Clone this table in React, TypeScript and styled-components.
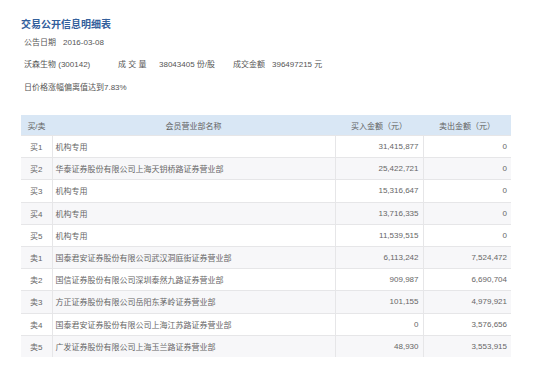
import styled, { createGlobalStyle } from 'styled-components';

const GlobalStyle = createGlobalStyle`
  body {
    margin: 0;
    background: #fff;
    font-family: "Liberation Sans", "Noto Sans CJK SC", sans-serif;
    color: #555;
  }
`;

type Trade = { side: string; name: string; buy: string; sell: string };

const trades: Trade[] = [
  { side: '买1', name: '机构专用', buy: '31,415,877', sell: '0' },
  { side: '买2', name: '华泰证券股份有限公司上海天钥桥路证券营业部', buy: '25,422,721', sell: '0' },
  { side: '买3', name: '机构专用', buy: '15,316,647', sell: '0' },
  { side: '买4', name: '机构专用', buy: '13,716,335', sell: '0' },
  { side: '买5', name: '机构专用', buy: '11,539,515', sell: '0' },
  { side: '卖1', name: '国泰君安证券股份有限公司武汉洞庭街证券营业部', buy: '6,113,242', sell: '7,524,472' },
  { side: '卖2', name: '国信证券股份有限公司深圳泰然九路证券营业部', buy: '909,987', sell: '6,690,704' },
  { side: '卖3', name: '方正证券股份有限公司岳阳东茅岭证券营业部', buy: '101,155', sell: '4,979,921' },
  { side: '卖4', name: '国泰君安证券股份有限公司上海江苏路证券营业部', buy: '0', sell: '3,576,656' },
  { side: '卖5', name: '广发证券股份有限公司上海玉兰路证券营业部', buy: '48,930', sell: '3,553,915' },
];

const App = () => {
  return (
    <Page>
      <GlobalStyle />
      <Title>交易公开信息明细表</Title>
      <InfoRow $gap={4}>
        <Field $width={39}>公告日期</Field>
        <Field>2016-03-08</Field>
      </InfoRow>
      <InfoRow $gap={8}>
        <Field $width={94}>沃森生物 (300142)</Field>
        <Field $width={41}>成 交 量</Field>
        <Field $width={74}>38043405 份/股</Field>
        <Field $width={39}>成交金额</Field>
        <Field>396497215 元</Field>
      </InfoRow>
      <InfoRow $gap={9}>
        <Field>日价格涨幅偏离值达到7.83%</Field>
      </InfoRow>
      <Table>
        <colgroup>
          <col style={{ width: 31 }} />
          <col style={{ width: 283 }} />
          <col style={{ width: 88 }} />
          <col style={{ width: 88 }} />
        </colgroup>
        <thead>
          <tr>
            <HeadCell>买/卖</HeadCell>
            <HeadCell>会员营业部名称</HeadCell>
            <HeadCell>买入金额（元）</HeadCell>
            <HeadCell>卖出金额（元）</HeadCell>
          </tr>
        </thead>
        <tbody>
          {trades.map((t, i) => (
            <Row key={t.side} $striped={i % 2 === 1}>
              <SideCell>{t.side}</SideCell>
              <NameCell>{t.name}</NameCell>
              <AmountCell>{t.buy}</AmountCell>
              <AmountCell>{t.sell}</AmountCell>
            </Row>
          ))}
        </tbody>
      </Table>
    </Page>
  );
};

const Page = styled.div`
  width: 550px;
  height: 375px;
  padding: 18px 0 0 21px;
  box-sizing: border-box;
  overflow: hidden;
`;

const Title = styled.h1`
  margin: 0;
  font-size: 10px;
  line-height: 14px;
  font-weight: bold;
  color: #33609c;
`;

const InfoRow = styled.div<{ $gap: number }>`
  display: flex;
  align-items: center;
  margin-top: ${(p) => p.$gap}px;
  padding-left: 3px;
  font-size: 8px;
  line-height: 14px;
  color: #555;
`;

const Field = styled.span<{ $width?: number }>`
  flex: none;
  width: ${(p) => (p.$width ? `${p.$width}px` : 'auto')};
  white-space: nowrap;
`;

const Table = styled.table`
  margin-top: 20px;
  width: 490px;
  border-collapse: collapse;
  table-layout: fixed;
  font-size: 8px;
`;

const HeadCell = styled.th`
  height: 20px;
  padding: 0;
  background: #d9e7f5;
  font-weight: normal;
  text-align: center;
  color: #5f5f5f;
`;

const Row = styled.tr<{ $striped: boolean }>`
  background: ${(p) => (p.$striped ? '#f7f7f9' : '#fff')};
  td {
    height: 21.2px;
    border-top: 1px solid #e6e6e8;
    padding: 0;
    white-space: nowrap;
    color: #666;
  }
`;

const SideCell = styled.td`
  text-align: center;
  border-right: 1px solid #e6e6e8;
`;

const NameCell = styled.td`
  padding-left: 3px !important;
`;

const AmountCell = styled.td`
  text-align: right;
  padding-right: 4px !important;
  border-left: 1px solid #e6e6e8;
`;

export default App;
